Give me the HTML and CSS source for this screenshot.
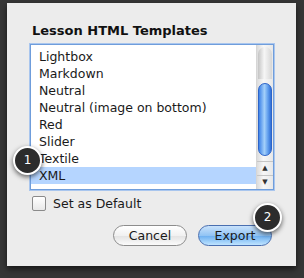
FILE: index.html
```html
<!DOCTYPE html>
<html lang="en">
<head>
  <meta charset="UTF-8" />
  <title>Lesson HTML Templates</title>
  <link rel="stylesheet" href="styles.css">
</head>
<body>

  <div class="dialog">
    <h1 class="title">Lesson HTML Templates</h1>

    <div class="listbox">
      <ul class="items">
        <li>Lightbox</li>
        <li>Markdown</li>
        <li>Neutral</li>
        <li>Neutral (image on bottom)</li>
        <li>Red</li>
        <li>Slider</li>
        <li>Textile</li>
        <li class="selected">XML</li>
      </ul>
      <div class="scrollbar">
        <div class="track">
          <div class="track-cap"></div>
          <div class="thumb"></div>
        </div>
        <div class="arrow">&#9650;</div>
        <div class="arrow">&#9660;</div>
      </div>
    </div>

    <label class="check-row">
      <span class="checkbox"></span>
      Set as Default
    </label>

    <div class="buttons">
      <button type="button" class="btn">Cancel</button>
      <button type="button" class="btn btn-default">Export</button>
    </div>

    <span class="badge badge-one">1</span>
    <span class="badge badge-two">2</span>
  </div>

</body>
</html>
```

FILE: styles.css
```css
body {
  margin: 0;
  background-color: #363636;
  font-family: "DejaVu Sans", "Lucida Grande", sans-serif;
  width: 304px;
  height: 278px;
  overflow: hidden;
}
.dialog {
  position: relative;
  margin: 3px 0 0 7px;
  width: 289px;
  height: 263px;
  background-color: #ececec;
  box-shadow: 0 3px 6px rgba(0,0,0,0.6);
  box-sizing: border-box;
  padding-top: 20px;
  display: flex;
  flex-direction: column;
}
.title {
  margin: 0 0 5px 25px;
  font-size: 13px;
  line-height: 16px;
  font-weight: bold;
  color: #111;
}
.listbox {
  margin-left: 23px;
  width: 244px;
  height: 146px;
  box-sizing: border-box;
  border: 1px solid #6f9ddb;
  box-shadow: 0 0 0 1px #a9c6ee;
  background-color: #fff;
  display: flex;
}
.items {
  list-style: none;
  margin: 0;
  padding: 3px 0 0 0;
  flex: 1;
  font-size: 12.5px;
  color: #1a1a1a;
}
.items li {
  height: 17px;
  line-height: 17px;
  padding-left: 8px;
  white-space: nowrap;
}
.items .selected {
  background-color: #b5d5ff;
}
.scrollbar {
  width: 17px;
  display: flex;
  flex-direction: column;
  border-left: 1px solid #d6d6d6;
  box-sizing: border-box;
  background: linear-gradient(to right, #dcdcdc, #f7f7f7 40%, #e8e8e8);
}
.track {
  flex: 1;
  display: flex;
  flex-direction: column;
  padding: 2px 0 4px 0;
}
.track-cap {
  height: 32px;
  margin: 0 1px;
  border-radius: 8px 8px 0 0;
  background: linear-gradient(to right, #c4c4c4, #f6f6f6 45%, #d6d6d6);
}
.thumb {
  margin: 4px 1px 0 1px;
  height: 71px;
  border-radius: 7px;
  border: 1px solid #2d64c8;
  background: linear-gradient(to right, #3e83e8, #a4d0fa 45%, #6aa6f0 70%, #2f6fd8);
}
.arrow {
  height: 13px;
  font-size: 7px;
  line-height: 13px;
  text-align: center;
  color: #333;
  border-top: 1px solid #c6c6c6;
}
.check-row {
  margin: 6px 0 0 25px;
  display: flex;
  align-items: center;
  gap: 7px;
  font-size: 12.5px;
  color: #1a1a1a;
  height: 14px;
}
.checkbox {
  width: 12px;
  height: 13px;
  border: 1px solid #8a8a8a;
  border-radius: 2px;
  background: linear-gradient(#ffffff, #e8e8e8);
}
.buttons {
  margin: 15px 24px 0 0;
  display: flex;
  justify-content: flex-end;
  gap: 11px;
}
.btn {
  width: 74px;
  height: 21px;
  border-radius: 11px;
  border: 1px solid #8c8c8c;
  background: linear-gradient(#ffffff, #f1f1f1 50%, #e2e2e2 51%, #fbfbfb);
  font-family: "DejaVu Sans", "Lucida Grande", sans-serif;
  font-size: 12.5px;
  color: #1a1a1a;
  padding: 0;
}
.btn-default {
  border-color: #4a6fb0;
  background: linear-gradient(#c9e2fb, #92c4f4 50%, #6aaef0 51%, #bfe4ff);
}
.badge {
  position: absolute;
  width: 25px;
  height: 25px;
  border-radius: 50%;
  background-color: #2c2c2c;
  border: 2px solid #fff;
  box-shadow: 0 2px 5px rgba(0,0,0,0.6);
  color: #fff;
  font-size: 12px;
  line-height: 25px;
  text-align: center;
}
.badge-one {
  left: 6px;
  top: 143px;
}
.badge-two {
  left: 246px;
  top: 200px;
}
```
